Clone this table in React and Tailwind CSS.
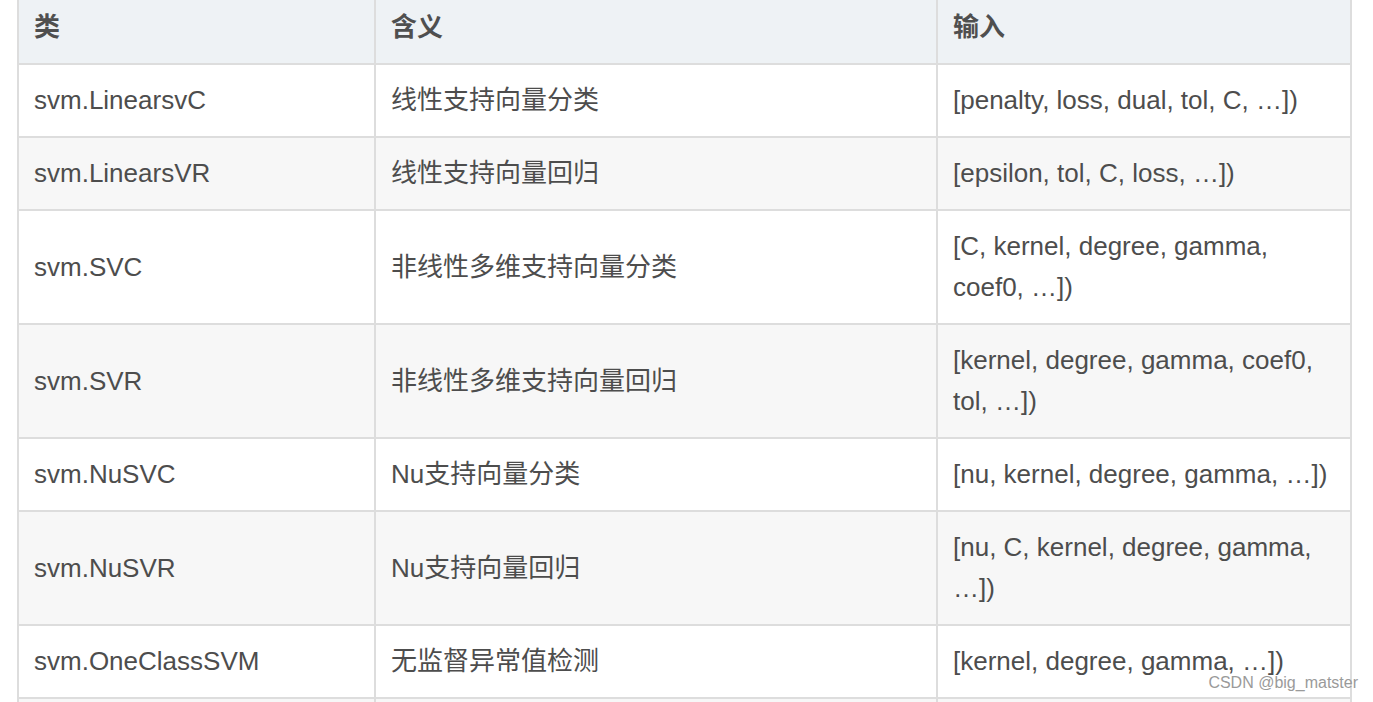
const rows = [
    { cls: 'svm.LinearsvC', desc: '线性支持向量分类', args: ['[penalty, loss, dual, tol, C, …])'] },
    { cls: 'svm.LinearsVR', desc: '线性支持向量回归', args: ['[epsilon, tol, C, loss, …])'] },
    { cls: 'svm.SVC', desc: '非线性多维支持向量分类', args: ['[C, kernel, degree, gamma,', 'coef0, …])'] },
    { cls: 'svm.SVR', desc: '非线性多维支持向量回归', args: ['[kernel, degree, gamma, coef0,', 'tol, …])'] },
    { cls: 'svm.NuSVC', desc: 'Nu支持向量分类', args: ['[nu, kernel, degree, gamma, …])'] },
    { cls: 'svm.NuSVR', desc: 'Nu支持向量回归', args: ['[nu, C, kernel, degree, gamma,', '…])'] },
    { cls: 'svm.OneClassSVM', desc: '无监督异常值检测', args: ['[kernel, degree, gamma, …])'] },
    { cls: '', desc: '', args: [''] },
]

const cell = 'border-2 border-[#dddddd] px-[15px] py-[15px] align-middle'

export default function App() {
    return (
        <div className="relative h-[702px] w-[1373px] overflow-hidden bg-white text-[26px] leading-[41px] text-[#4d4d4d] [font-family:'Liberation_Sans','Noto_Sans_CJK_SC',sans-serif]">
            <table className="-mt-[10px] ml-[17px] w-[1333px] table-fixed border-collapse">
                <colgroup>
                    <col className="w-[357px]" />
                    <col className="w-[562px]" />
                    <col className="w-[414px]" />
                </colgroup>
                <thead>
                    <tr className="bg-[#eef2f5] text-left font-bold text-[#4f4f4f]">
                        <th className={cell}>类</th>
                        <th className={cell}>含义</th>
                        <th className={cell}>输入</th>
                    </tr>
                </thead>
                <tbody>
                    {rows.map((r, i) => (
                        <tr key={i} className={i % 2 === 0 ? 'bg-white' : 'bg-[#f7f7f7]'}>
                            <td className={cell}>{r.cls || '\u00a0'}</td>
                            <td className={cell}>{r.desc}</td>
                            <td className={cell}>
                                {r.args.map((line, j) => (
                                    <div key={j} className="whitespace-nowrap">{line || '\u00a0'}</div>
                                ))}
                            </td>
                        </tr>
                    ))}
                </tbody>
            </table>

            {/* watermark */}
            <span className="absolute bottom-[9px] right-[15px] text-[16px] leading-[20px] text-[#9a9a9a] [font-family:'Liberation_Sans',sans-serif]">
                CSDN @big_matster
            </span>
        </div>
    )
}
